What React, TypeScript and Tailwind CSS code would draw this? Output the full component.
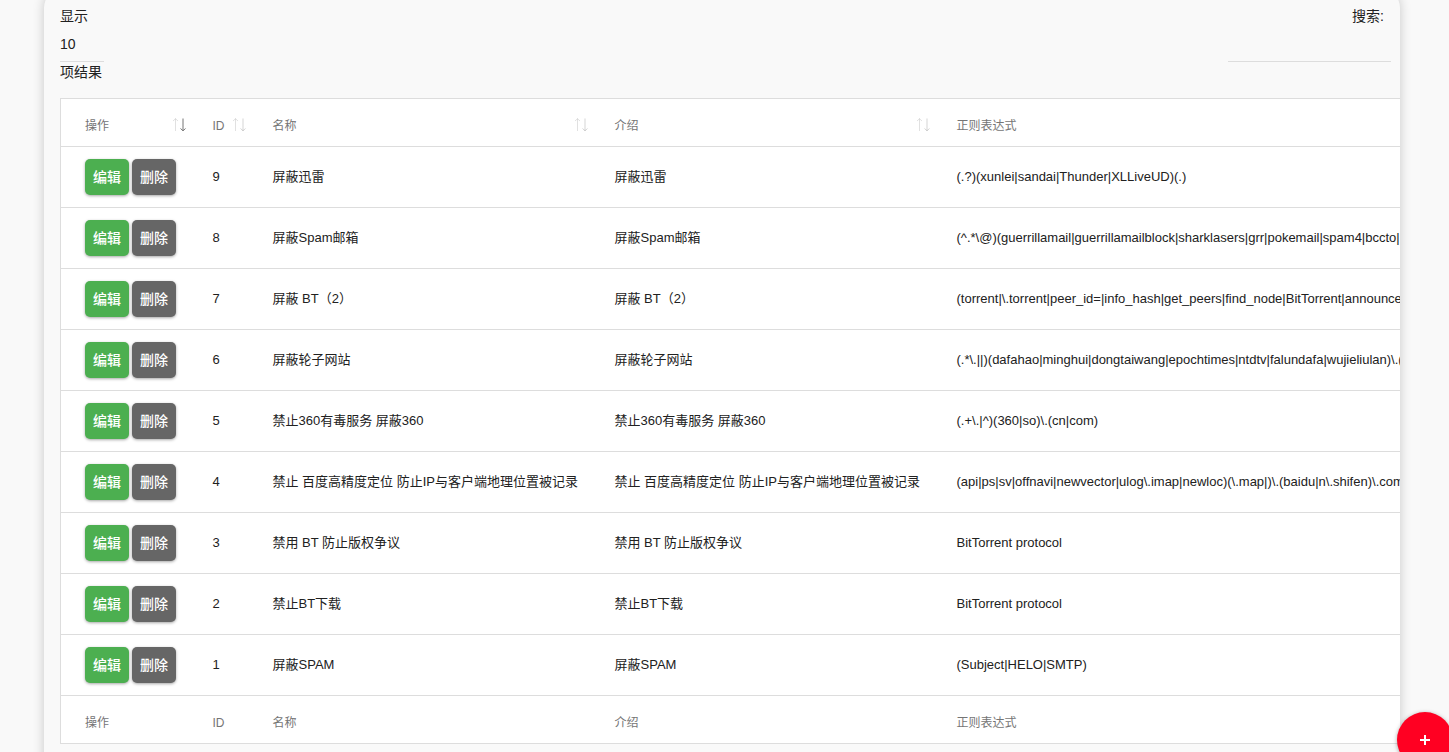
type Rule = { id: number; name: string; intro: string; regex: string };

const rules: Rule[] = [
  { id: 9, name: "屏蔽迅雷", intro: "屏蔽迅雷", regex: "(.?)(xunlei|sandai|Thunder|XLLiveUD)(.)" },
  {
    id: 8,
    name: "屏蔽Spam邮箱",
    intro: "屏蔽Spam邮箱",
    regex: "(^.*\\@)(guerrillamail|guerrillamailblock|sharklasers|grr|pokemail|spam4|bccto|",
  },
  {
    id: 7,
    name: "屏蔽 BT（2）",
    intro: "屏蔽 BT（2）",
    regex: "(torrent|\\.torrent|peer_id=|info_hash|get_peers|find_node|BitTorrent|announce",
  },
  {
    id: 6,
    name: "屏蔽轮子网站",
    intro: "屏蔽轮子网站",
    regex: "(.*\\.||)(dafahao|minghui|dongtaiwang|epochtimes|ntdtv|falundafa|wujieliulan)\\.(",
  },
  { id: 5, name: "禁止360有毒服务 屏蔽360", intro: "禁止360有毒服务 屏蔽360", regex: "(.+\\.|^)(360|so)\\.(cn|com)" },
  {
    id: 4,
    name: "禁止 百度高精度定位 防止IP与客户端地理位置被记录",
    intro: "禁止 百度高精度定位 防止IP与客户端地理位置被记录",
    regex: "(api|ps|sv|offnavi|newvector|ulog\\.imap|newloc)(\\.map|)\\.(baidu|n\\.shifen)\\.com",
  },
  { id: 3, name: "禁用 BT 防止版权争议", intro: "禁用 BT 防止版权争议", regex: "BitTorrent protocol" },
  { id: 2, name: "禁止BT下载", intro: "禁止BT下载", regex: "BitTorrent protocol" },
  { id: 1, name: "屏蔽SPAM", intro: "屏蔽SPAM", regex: "(Subject|HELO|SMTP)" },
];

const columns = ["操作", "ID", "名称", "介绍", "正则表达式"];

function SortArrows({ active }: { active: boolean }) {
  return (
    <svg width="15" height="16" viewBox="0 0 15 16" fill="none" stroke="#757575" aria-hidden="true">
      <path d="M3.5 13V0.7M1 3L3.5 0.7L6 3" opacity="0.22" />
      <path d="M11 0.5V12.8M8.5 10.5L11 12.8L13.5 10.5" opacity={active ? 1 : 0.3} />
    </svg>
  );
}

function HeadCell({ index, label }: { index: number; label: string }) {
  return (
    <th
      scope="col"
      aria-sort={index === 0 ? "descending" : undefined}
      className="h-12 pt-[6px] pr-2 pl-[18px] text-left text-xs font-normal first:pl-6"
    >
      {index < 4 ? (
        <button type="button" className="flex w-full items-center justify-between">
          {label}
          <SortArrows active={index === 0} />
        </button>
      ) : (
        label
      )}
    </th>
  );
}

function ActionButton({ label, tone }: { label: string; tone: "green" | "gray" }) {
  const color = tone === "green" ? "bg-[#4caf50]" : "bg-[#666666]";
  return (
    <button
      type="button"
      className={`h-9 w-11 rounded-[5px] text-sm font-medium text-white shadow-[0_1px_3px_rgba(0,0,0,0.35)] ${color}`}
    >
      {label}
    </button>
  );
}

export default function App() {
  return (
    <div className="min-h-screen overflow-hidden bg-[#f9f9f9] pr-[49px] pl-[44px] font-['Liberation_Sans','Noto_Sans_CJK_SC',sans-serif] text-[#212121]">
      <main className="-mt-3 overflow-hidden rounded-[20px] bg-[#f9f9f9] pt-[18px] pb-10 pl-4 shadow-[0_0_12px_rgba(0,0,0,0.2)]">
        <div className="flex items-start justify-between pr-[9px] text-sm leading-5">
          <div className="flex flex-col items-start">
            <label htmlFor="page-size">显示</label>
            <select
              id="page-size"
              className="mt-2 h-7 w-11 appearance-none border-b border-[#dddddd] bg-transparent pb-2"
            >
              <option>10</option>
            </select>
            <span>项结果</span>
          </div>
          <div className="flex flex-col items-end">
            <label htmlFor="search" className="pr-[7px]">
              搜索:
            </label>
            <input
              id="search"
              type="search"
              className="mt-2 h-7 w-[163px] appearance-none border-b border-[#dddddd] bg-transparent outline-none"
            />
          </div>
        </div>

        <div className="mt-4 overflow-hidden">
          <table className="w-[150%] table-fixed border-collapse border border-[#dddddd] bg-white text-[13px] leading-5 whitespace-nowrap">
            <colgroup>
              <col className="w-[134px]" />
              <col className="w-[60px]" />
              <col className="w-[342px]" />
              <col className="w-[342px]" />
              <col />
            </colgroup>
            <thead className="text-[#757575]">
              <tr>
                {columns.map((c, i) => (
                  <HeadCell key={c} index={i} label={c} />
                ))}
              </tr>
            </thead>
            <tbody>
              {rules.map((r) => (
                <tr key={r.id} className="h-[61px] border-t border-[#dddddd]">
                  <td className="pl-6">
                    <div className="flex gap-[3px]">
                      <ActionButton label="编辑" tone="green" />
                      <ActionButton label="删除" tone="gray" />
                    </div>
                  </td>
                  <td className="pl-[18px]">{r.id}</td>
                  <td className="pl-[18px]">{r.name}</td>
                  <td className="pl-[18px]">{r.intro}</td>
                  <td className="pl-[18px]">{r.regex}</td>
                </tr>
              ))}
            </tbody>
            <tfoot className="text-[#757575]">
              <tr className="border-t border-[#dddddd]">
                {columns.map((c) => (
                  <th
                    key={c}
                    scope="col"
                    className="h-12 pt-[6px] pl-[18px] text-left text-xs font-normal first:pl-6"
                  >
                    {c}
                  </th>
                ))}
              </tr>
            </tfoot>
          </table>
        </div>
      </main>

      <button
        type="button"
        aria-label="添加"
        className="fixed -right-1 -bottom-4 flex size-14 items-center justify-center rounded-full bg-[#ff0022] shadow-[0_1px_4px_rgba(0,0,0,0.35)]"
      >
        <svg width="10" height="10" viewBox="0 0 10 10" stroke="#ffffff" strokeWidth="2" aria-hidden="true">
          <path d="M5 0V10M0 5H10" />
        </svg>
      </button>
    </div>
  );
}
